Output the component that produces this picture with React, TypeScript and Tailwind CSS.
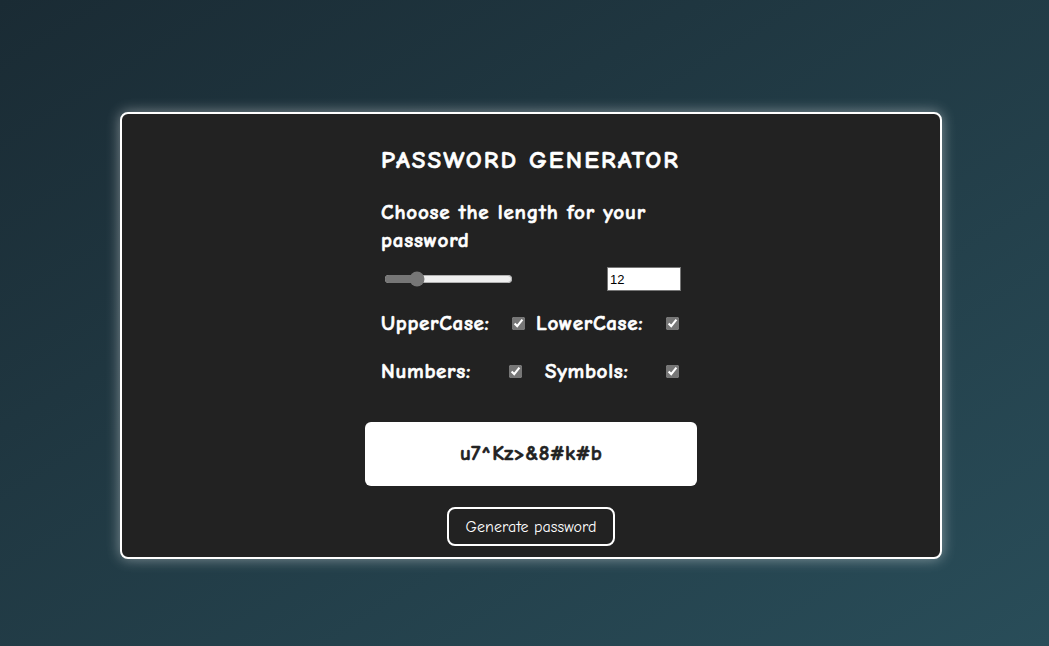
import { useState } from 'react'

const FONT = "font-['Comic_Sans_MS','Comic_Neue','DejaVu_Sans',sans-serif]"
// Comic Neue sem peso bold real: um traço fino engrossa as letras
const BOLD = 'font-bold [-webkit-text-stroke:0.6px_currentColor]'

function Option({ label, width }: { label: string; width: string }) {
  const [checked, setChecked] = useState(true)
  return (
    <>
      <label className={`${width} ${BOLD} text-[21px] leading-[28px] tracking-[0.7px] text-white`}>{label}</label>
      <input
        type="checkbox"
        checked={checked}
        onChange={() => setChecked(!checked)}
        className="m-0 h-[13px] w-[13px] accent-[#767676]"
      />
    </>
  )
}

export default function App() {
  const [length, setLength] = useState(12)

  return (
    <div className={`min-h-screen bg-linear-to-br from-[#1a2b34] to-[#294d59] pl-[120px] pt-[112px] ${FONT}`}>
      <div className="flex w-[822px] flex-col items-center rounded-lg border-2 border-white bg-[#222222] pb-[11px] pt-[30px] shadow-[0_0_14px_rgba(255,255,255,0.45)]">
        {/* Coluna central */}
        <div className="flex w-[300px] flex-col">
          <h1 className={`${BOLD} whitespace-nowrap text-[25px] leading-[32px] tracking-[2.1px] text-white`}>
            PASSWORD GENERATOR
          </h1>
          <p className={`mt-[22px] ${BOLD} text-[21px] leading-[28px] tracking-[0.8px] text-white`}>
            Choose the length for your password
          </p>

          <div className="mt-[13px] flex h-6 items-center justify-between">
            <input
              type="range"
              min={1}
              max={50}
              value={length}
              onChange={(e) => setLength(Number(e.target.value))}
              className="ml-[3px] w-[129px] accent-[#767676]"
            />
            <input
              type="number"
              value={length}
              onChange={(e) => setLength(Number(e.target.value))}
              className="h-6 w-[74px] border border-[#767676] bg-white px-0.5 text-[13px] text-black font-['Liberation_Sans',sans-serif]"
            />
          </div>

          <div className="mt-[18px] flex items-center">
            <Option label="UpperCase:" width="w-[131px]" />
            <div className="w-[11px]" />
            <Option label="LowerCase:" width="w-[130px]" />
          </div>

          <div className="mt-[20px] flex items-center">
            <Option label="Numbers:" width="w-[128px]" />
            <div className="w-[23px]" />
            <Option label="Symbols:" width="w-[121px]" />
          </div>
        </div>

        <div className="mt-[37px] flex h-16 w-[332px] items-center justify-center rounded-md bg-white">
          <span className={`${BOLD} text-[21px] tracking-[0.3px] text-[#222222]`}>u7^Kz&gt;&amp;8#k#b</span>
        </div>

        <button className="mt-[21px] h-[39px] rounded-lg border-2 border-white px-4 text-[16px] tracking-[0.05px] text-white">
          Generate password
        </button>
      </div>
    </div>
  )
}
